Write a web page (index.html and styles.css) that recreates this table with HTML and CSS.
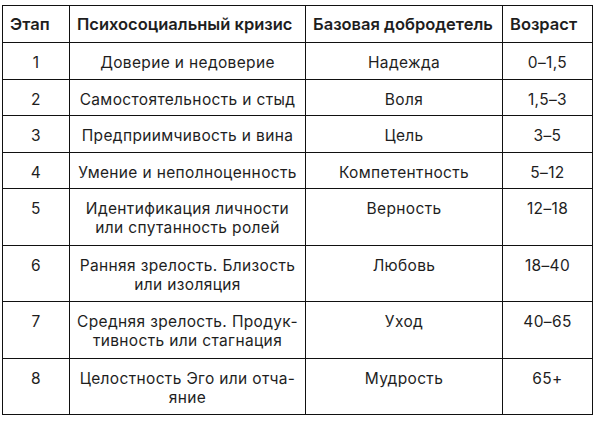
FILE: index.html
```html
<!DOCTYPE html>
<html lang="ru">
<head>
<meta charset="utf-8">
<link rel="stylesheet" href="styles.css">
</head>
<body>
<table class="stages">
  <colgroup>
    <col class="c-stage">
    <col class="c-crisis">
    <col class="c-virtue">
    <col class="c-age">
  </colgroup>
  <thead>
    <tr>
      <th>Этап</th>
      <th>Психосоциальный кризис</th>
      <th>Базовая добродетель</th>
      <th>Возраст</th>
    </tr>
  </thead>
  <tbody>
    <tr><td>1</td><td>Доверие и недоверие</td><td>Надежда</td><td>0–1,5</td></tr>
    <tr><td>2</td><td>Самостоятельность и стыд</td><td>Воля</td><td>1,5–3</td></tr>
    <tr><td>3</td><td>Предприимчивость и вина</td><td>Цель</td><td>3–5</td></tr>
    <tr><td>4</td><td>Умение и неполноценность</td><td>Компетентность</td><td>5–12</td></tr>
    <tr class="tall"><td>5</td><td>Идентификация личности<br>или спутанность ролей</td><td>Верность</td><td>12–18</td></tr>
    <tr class="tall"><td>6</td><td>Ранняя зрелость. Близость<br>или изоляция</td><td>Любовь</td><td>18–40</td></tr>
    <tr class="tall"><td>7</td><td>Средняя зрелость. Продук-<br>тивность или стагнация</td><td>Уход</td><td>40–65</td></tr>
    <tr class="tall"><td>8</td><td>Целостность Эго или отча-<br>яние</td><td>Мудрость</td><td>65+</td></tr>
  </tbody>
</table>
</body>
</html>
```
FILE: styles.css
```css
html, body {
  background: #ffffff;
}
body {
  margin: 5px 0 0 2px;
  font-family: Inter, "Open Sans", sans-serif;
  color: #1e1e1e;
}
.stages {
  border-collapse: collapse;
  width: 590px;
  table-layout: fixed;
}
.c-stage { width: 67px; }
.c-crisis { width: 236px; }
.c-virtue { width: 197px; }
.c-age { width: 90px; }
.stages th,
.stages td {
  border: 1px solid #111;
  line-height: 19px;
  vertical-align: top;
  white-space: nowrap;
}
.stages th {
  text-align: left;
  font-size: 16.5px;
  font-weight: 600;
  padding: 9px 2px 8px 7px;
  letter-spacing: 0;
}
.stages td {
  text-align: center;
  font-size: 15.5px;
  font-weight: 400;
  padding: 10px 2px 6.5px 2px;
  letter-spacing: 0.35px;
}
.stages tr.tall td {
  padding-bottom: 7.5px;
}
```
